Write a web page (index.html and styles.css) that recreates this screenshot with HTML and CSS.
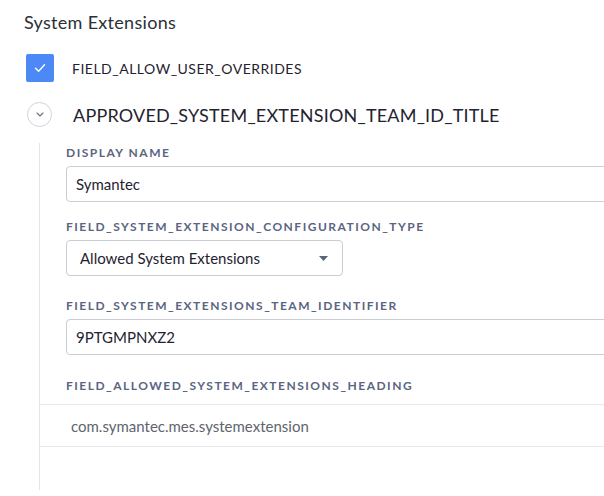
FILE: index.html
```html
<!DOCTYPE html>
<html>
<head>
<meta charset="utf-8">
<link rel="stylesheet" href="styles.css">
</head>
<body>
<div class="page">
  <h2 class="title">System Extensions</h2>
  <div class="check-row">
    <span class="checkbox">
      <svg width="12" height="10" viewBox="0 0 12 10"><path d="M1.5 5.2 L4.6 8.2 L10.5 1.8" fill="none" stroke="#fff" stroke-width="1.4" stroke-linecap="round" stroke-linejoin="round"/></svg>
    </span>
    <span class="check-label">FIELD_ALLOW_USER_OVERRIDES</span>
  </div>
  <div class="group-head">
    <span class="toggle">
      <svg width="8" height="5" viewBox="0 0 8 5"><path d="M1 1 L4 4 L7 1" fill="none" stroke="#6b7389" stroke-width="1.1" stroke-linecap="round" stroke-linejoin="round"/></svg>
    </span>
    <span class="group-title">APPROVED_SYSTEM_EXTENSION_TEAM_ID_TITLE</span>
  </div>
  <div class="group-body">
    <div class="field field-tight">
      <div class="label">DISPLAY NAME</div>
      <div class="input">Symantec</div>
    </div>
    <div class="field">
      <div class="label">FIELD_SYSTEM_EXTENSION_CONFIGURATION_TYPE</div>
      <div class="select">
        <span>Allowed System Extensions</span>
        <svg width="9" height="5" viewBox="0 0 9 5"><path d="M0 0 H9 L4.5 5 Z" fill="#5a6378"/></svg>
      </div>
    </div>
    <div class="field">
      <div class="label">FIELD_SYSTEM_EXTENSIONS_TEAM_IDENTIFIER</div>
      <div class="input">9PTGMPNXZ2</div>
    </div>
    <div class="field list-field">
      <div class="label">FIELD_ALLOWED_SYSTEM_EXTENSIONS_HEADING</div>
    </div>
    <div class="list">
      <div class="list-item">com.symantec.mes.systemextension</div>
    </div>
  </div>
</div>
</body>
</html>
```
FILE: styles.css
```css
html, body {
  margin: 0;
  padding: 0;
  background: #fff;
  overflow: hidden;
}
body {
  width: 604px;
  height: 496px;
  font-family: "Lato", "Open Sans", sans-serif;
  color: #1f2330;
}
.page {
  padding: 11px 0 0 24px;
  width: 700px;
}
.title {
  margin: 0;
  font-size: 18px;
  font-weight: 400;
  letter-spacing: 0.3px;
  line-height: 22px;
  color: #2b2f38;
}
.check-row {
  display: flex;
  align-items: center;
  margin-top: 21px;
  padding-left: 2px;
}
.checkbox {
  width: 28px;
  height: 28px;
  border-radius: 2px;
  background: #4c88f6;
  display: flex;
  align-items: center;
  justify-content: center;
}
.check-label {
  margin-left: 18px;
  font-size: 14px;
  letter-spacing: 0.5px;
  color: #1f2330;
}
.group-head {
  display: flex;
  align-items: center;
  margin-top: 20px;
  padding-left: 3px;
  height: 25px;
}
.toggle {
  width: 25px;
  height: 25px;
  border: 1px solid #cfd3dc;
  border-radius: 50%;
  display: flex;
  align-items: center;
  justify-content: center;
  box-sizing: border-box;
}
.group-title {
  margin-left: 21px;
  font-size: 18px;
  letter-spacing: 0.2px;
  line-height: 22px;
  color: #1f2330;
}
.group-body {
  margin-left: 15px;
  margin-top: 16px;
  border-left: 1px solid #e3e5ea;
  padding-bottom: 43px;
}
.field {
  padding-left: 26px;
  padding-top: 2px;
  padding-bottom: 21px;
}
.field-tight {
  padding-top: 3px;
  padding-bottom: 16px;
}
.label {
  font-size: 12px;
  font-weight: 700;
  letter-spacing: 1.5px;
  color: #5a6582;
  line-height: 14px;
  margin-bottom: 6px;
}
.input, .select {
  height: 36px;
  box-sizing: border-box;
  border: 1px solid #c9cdd6;
  border-radius: 4px;
  display: flex;
  align-items: center;
  font-size: 15px;
  color: #1f2330;
}
.input {
  padding-left: 9px;
}
.select {
  width: 277px;
  padding: 0 14px 0 13px;
  justify-content: space-between;
}
.list-field {
  padding-top: 3px;
  padding-bottom: 5px;
}
.list {
  border-top: 1px solid #e6e8ec;
  border-bottom: 1px solid #e6e8ec;
}
.list-item {
  height: 41px;
  display: flex;
  align-items: center;
  padding-left: 31px;
  font-size: 15px;
  color: #60646e;
}
```
